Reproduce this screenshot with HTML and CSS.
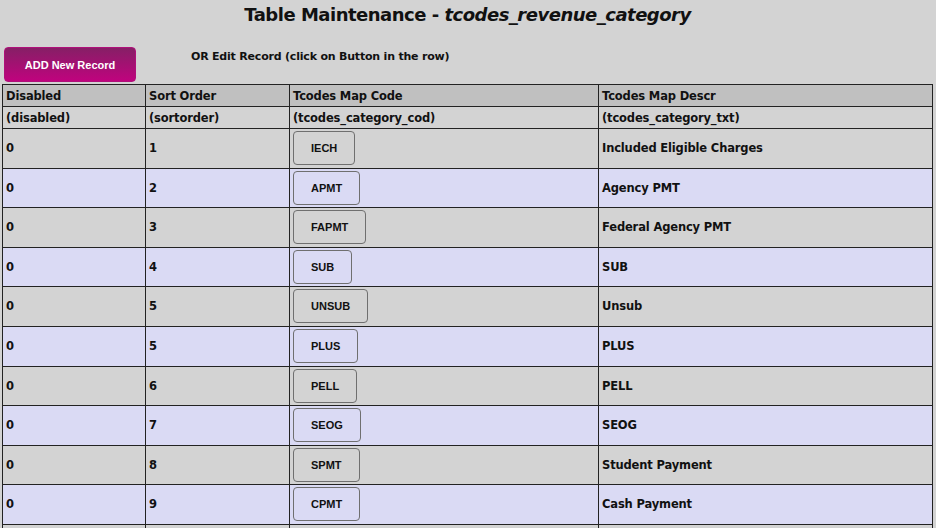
FILE: index.html
```html
<!DOCTYPE html>
<html lang="en">
<head>
    <meta charset="UTF-8" />
    <meta name="viewport" content="width=device-width, initial-scale=1" />
    <title>Table Maintenance - tcodes_revenue_category</title>
    <link rel="stylesheet" href="styles.css">
</head>
<body>

    <h2 class="title">Table Maintenance - <em>tcodes_revenue_category</em></h2>

    <div class="toolbar">
        <button class="add-btn">ADD New Record</button>
        <span class="hint">OR Edit Record (click on Button in the row)</span>
    </div>

    <table class="grid">
        <colgroup>
            <col class="c1"><col class="c2"><col class="c3"><col class="c4">
        </colgroup>
        <tr class="head">
            <th>Disabled</th>
            <th>Sort Order</th>
            <th>Tcodes Map Code</th>
            <th>Tcodes Map Descr</th>
        </tr>
        <tr class="sub">
            <td>(disabled)</td>
            <td>(sortorder)</td>
            <td>(tcodes_category_cod)</td>
            <td>(tcodes_category_txt)</td>
        </tr>
        <tr><td>0</td><td>1</td><td><button class="row-btn">IECH</button></td><td>Included Eligible Charges</td></tr>
        <tr><td>0</td><td>2</td><td><button class="row-btn">APMT</button></td><td>Agency PMT</td></tr>
        <tr><td>0</td><td>3</td><td><button class="row-btn">FAPMT</button></td><td>Federal Agency PMT</td></tr>
        <tr><td>0</td><td>4</td><td><button class="row-btn">SUB</button></td><td>SUB</td></tr>
        <tr><td>0</td><td>5</td><td><button class="row-btn">UNSUB</button></td><td>Unsub</td></tr>
        <tr><td>0</td><td>5</td><td><button class="row-btn">PLUS</button></td><td>PLUS</td></tr>
        <tr><td>0</td><td>6</td><td><button class="row-btn">PELL</button></td><td>PELL</td></tr>
        <tr><td>0</td><td>7</td><td><button class="row-btn">SEOG</button></td><td>SEOG</td></tr>
        <tr><td>0</td><td>8</td><td><button class="row-btn">SPMT</button></td><td>Student Payment</td></tr>
        <tr><td>0</td><td>9</td><td><button class="row-btn">CPMT</button></td><td>Cash Payment</td></tr>
        <tr><td>&nbsp;</td><td>&nbsp;</td><td>&nbsp;</td><td>&nbsp;</td></tr>
    </table>

</body>
</html>
```

FILE: styles.css
```css
body { font-family: "DejaVu Sans", Arial, sans-serif; background: #d3d3d3; color: #111; margin: 0; padding: 0 3px 0 2px; }
.title { margin: 0; padding-top: 4px; text-align: center; font-size: 18px; letter-spacing: -0.5px; font-weight: bold; line-height: 22px; }
.toolbar { display: flex; align-items: flex-start; margin-top: 21px; height: 37px; }
.add-btn { margin-left: 2px; width: 132px; height: 35px; border: 1px solid #b0107a; border-radius: 4px; color: #fff; font-family: "Liberation Sans", Arial, sans-serif; font-weight: bold; font-size: 11px; background: linear-gradient(#861f66, #c0037e); cursor: pointer; }
.hint { margin-left: 55px; margin-top: 3px; font-size: 11px; letter-spacing: -0.2px; font-weight: bold; }
.grid { width: 931px; border-collapse: collapse; font-size: 11.5px; letter-spacing: -0.15px; font-weight: bold; }
.grid th, .grid td { border: 1px solid #222; padding: 2px 3px; text-align: left; }
.grid .c1 { width: 143px; }
.grid .c2 { width: 144px; }
.grid .c3 { width: 309px; }
.head th { background: #c0c0c0; height: 17px; }
.sub td { height: 17px; }
.grid tr:nth-child(odd) td { background: #d3d3d3; padding-bottom: 2.6px; }
.grid tr:nth-child(even) td { background: #dadaf4; padding-bottom: 2.6px; }
.grid tr.sub td { background: #d3d3d3; padding-bottom: 2px; }
.row-btn { height: 34px; padding: 0 17px; border: 1px solid #6f6f6f; border-radius: 4px; background: transparent; color: #111; font-family: "Liberation Sans", Arial, sans-serif; font-weight: bold; font-size: 11px; letter-spacing: 0; cursor: pointer; display: block; }
```
